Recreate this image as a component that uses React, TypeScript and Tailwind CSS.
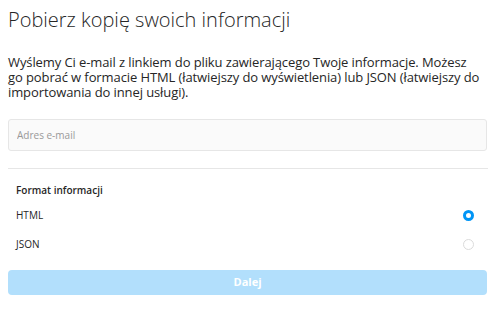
import { useState } from 'react';

export default function App() {
  const [format, setFormat] = useState<'html' | 'json'>('html');
  const [email, setEmail] = useState('');

  return (
    <div className="w-[500px] h-[313px] bg-white px-2 text-[#262626]" style={{ fontFamily: '"Open Sans", "Noto Sans", sans-serif' }}>
      <h1 className="pt-[6px] text-[20px] font-light leading-[28px]">Pobierz kopię swoich informacji</h1>

      <p className="mt-[21px] text-[13px] leading-[15px] tracking-[-0.1px] text-[#262626] w-[486px]">
        {'Wyślemy Ci e-mail z linkiem do pliku zawierającego Twoje informacje. Możesz go\u00a0pobrać w formacie HTML (łatwiejszy do wyświetlenia) lub JSON (łatwiejszy do importowania do innej usługi).'}
      </p>

      <input
        value={email}
        onChange={(e) => setEmail(e.target.value)}
        placeholder="Adres e-mail"
        className="mt-[19px] block w-[479px] h-[32px] rounded-[3px] border border-[#e6e6e6] bg-[#fafafa] px-2 text-[10px] placeholder:text-[#999] outline-none"
      />

      <div className="mt-[17px] border-t border-[#e6e6e6] w-[480px]" />

      <div className="pl-2 pr-[14px] w-[480px]">
        <div className="mt-[14px] text-[10px] font-semibold leading-[14px]">Format informacji</div>

        {/* Opcje formatu */}
        <label className="mt-[10px] flex items-center justify-between h-[16px] cursor-pointer" onClick={() => setFormat('html')}>
          <span className="text-[10px]">HTML</span>
          <span
            className={
              format === 'html'
                ? 'w-[11px] h-[11px] rounded-full border-[3px] border-[#0095f6] bg-white'
                : 'w-[11px] h-[11px] rounded-full border border-[#dbdbdb] bg-white'
            }
          />
        </label>
        <label className="mt-[13px] flex items-center justify-between h-[16px] cursor-pointer" onClick={() => setFormat('json')}>
          <span className="text-[10px]">JSON</span>
          <span
            className={
              format === 'json'
                ? 'w-[11px] h-[11px] rounded-full border-[3px] border-[#0095f6] bg-white'
                : 'w-[11px] h-[11px] rounded-full border border-[#dbdbdb] bg-white'
            }
          />
        </label>
      </div>

      <button
        disabled={!email}
        className="mt-[18px] block w-[479px] h-[25px] rounded-[4px] bg-[#b2dffc] text-white text-[11px] font-bold"
      >
        Dalej
      </button>
    </div>
  );
}
